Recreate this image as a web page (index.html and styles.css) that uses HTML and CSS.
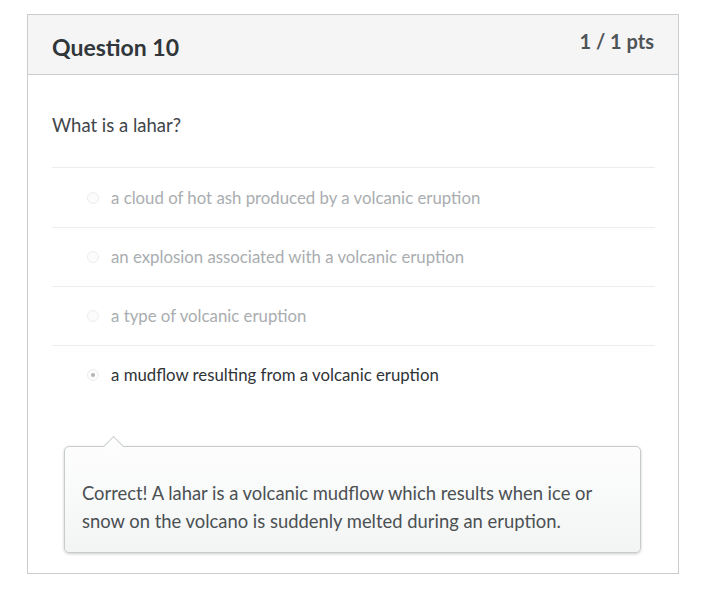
FILE: index.html
```html
<!DOCTYPE html>
<html lang="en">
    <head>
        <meta charset="UTF-8">
        <meta name="viewport" content="width=device-width, initial-scale=1.0">
        <title>Question 10</title>
        <link rel="stylesheet" href="styles.css">
    </head>

    <body>
        <div class="page">
            <div class="question">
                <div class="header">
                    <h2 class="title">Question 10</h2>
                    <span class="points">1 / 1 pts</span>
                </div>
                <div class="content">
                    <p class="text">What is a lahar?</p>
                    <div class="answers">
                        <label class="answer">
                            <span class="radio"></span>
                            a cloud of hot ash produced by a volcanic eruption
                        </label>
                        <label class="answer">
                            <span class="radio"></span>
                            an explosion associated with a volcanic eruption
                        </label>
                        <label class="answer">
                            <span class="radio"></span>
                            a type of volcanic eruption
                        </label>
                        <label class="answer selected">
                            <span class="radio"></span>
                            a mudflow resulting from a volcanic eruption
                        </label>
                    </div>
                    <div class="feedback">
                        <p>Correct! A lahar is a volcanic mudflow which results when ice or snow on the volcano is suddenly melted during an eruption.</p>
                    </div>
                </div>
            </div>
        </div>
    </body>

</html>
```

FILE: styles.css
```css
* {
    margin: 0;
    padding: 0;
    box-sizing: border-box;
    font-family: 'Lato', 'Liberation Sans', sans-serif;
}

body {
    background: white;
}

.page {
    padding: 14px 0 0 27px;
}

.question {
    width: 652px;
    border: 1px solid #c9cdd0;
    background: white;

    & .header {
        display: flex;
        justify-content: space-between;
        align-items: flex-start;
        height: 60px;
        padding: 0 24px;
        background: #f5f5f5;
        border-bottom: 1px solid #c9cdd0;
    }

    & .title {
        font-size: 23px;
        line-height: 26px;
        font-weight: bold;
        color: #30363a;
        margin-top: 19px;
    }

    & .points {
        font-size: 20px;
        line-height: 24px;
        font-weight: bold;
        color: #4f5457;
        margin-top: 14px;
    }
}

.content {
    padding: 37px 23px 20px 24px;

    & .text {
        font-size: 18.5px;
        line-height: 26px;
        color: #3f4549;
        padding-bottom: 29px;
    }
}

.answers {
    border-top: 1px solid #ececec;

    & .answer {
        display: flex;
        align-items: center;
        height: 59px;
        padding-left: 35px;
        font-size: 16.8px;
        line-height: 22px;
        color: #a9adb0;

        &+.answer {
            border-top: 1px solid #ececec;
        }
    }

    & .radio {
        width: 12px;
        height: 12px;
        margin-right: 12px;
        border-radius: 50%;
        border: 1px solid #ececec;
        background: #fcfcfc;
        display: flex;
        justify-content: center;
        align-items: center;
    }

    & .selected {
        color: #2f3437;

        & .radio::after {
            content: '';
            width: 4px;
            height: 4px;
            border-radius: 50%;
            background: #b0b4b6;
        }
    }
}

.feedback {
    position: relative;
    margin: 42px 14px 0 12px;
    padding: 32px 18px 17px 17px;
    border: 1px solid #c6ccce;
    border-radius: 5px;
    background: linear-gradient(#fdfdfd, #f3f5f5);
    box-shadow: 0 1px 3px rgba(0, 0, 0, 0.2);

    & p {
        font-size: 18.4px;
        line-height: 28px;
        color: #4b5053;
    }

    /* arrow pointing at the chosen answer */
    &::before {
        content: '';
        position: absolute;
        left: 41px;
        top: -8px;
        width: 14px;
        height: 14px;
        background: #fdfdfd;
        border-top: 1px solid #c6ccce;
        border-left: 1px solid #c6ccce;
        transform: rotate(45deg);
    }
}
```
